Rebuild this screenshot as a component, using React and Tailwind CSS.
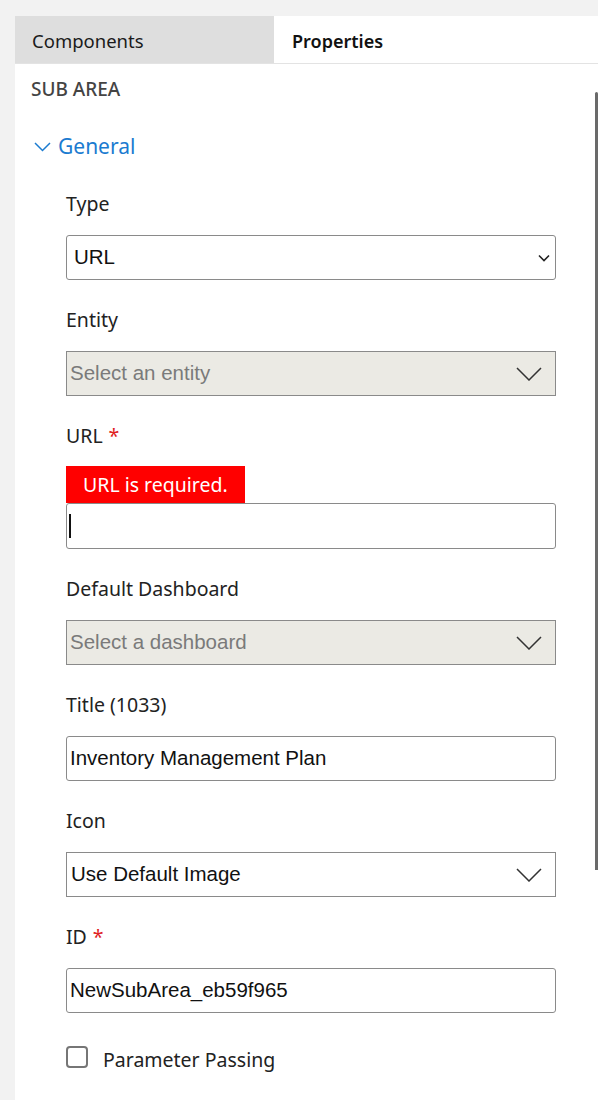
import React from 'react';

const segoe = { fontFamily: '"Noto Sans", "Open Sans", sans-serif' };

const BigChevron = () => (
  <svg width="26" height="14" viewBox="0 0 26 14" fill="none" className="shrink-0">
    <path d="M1 1 L13 13 L25 1" stroke="#333" strokeWidth="1.5" />
  </svg>
);

const Label = ({ children, required }) => (
  <div className="h-[28px] leading-[28px] text-[19.5px] text-[#222] mb-[17px]">
    {children}
    {required && <span className="text-[#e0221f] ml-[6px]">*</span>}
  </div>
);

const GraySelect = ({ placeholder }) => (
  <div className="h-[45px] border border-[#8a8a8a] bg-[#ebeae4] flex items-center justify-between pl-[3px] pr-[13px]">
    <span className="font-['Liberation_Sans',Arial,sans-serif] text-[20.5px] text-[#7a7a7a]">{placeholder}</span>
    <BigChevron />
  </div>
);

const TextInput = ({ value }) => (
  <div className="h-[45px] border border-[#8a8a8a] rounded-[3px] bg-white flex items-center pl-[3px]">
    <span className="font-['Liberation_Sans',Arial,sans-serif] text-[20.5px] text-[#111]">{value}</span>
  </div>
);

export default function App() {
  return (
    <div className="min-h-[1100px] bg-[#f2f2f2] pt-[16px] pl-[15px]" style={segoe}>
      <div className="bg-white relative min-h-[1084px]">
        {/* Tabs */}
        <div className="flex h-[48px] border-b border-[#e3e3e3]">
          <div className="w-[259px] bg-[#dedede] flex items-center pl-[17px] pt-[3px] text-[18.5px] text-[#1a1a1a]">
            Components
          </div>
          <div className="flex-1 flex items-center pl-[18px] pt-[3px] text-[18px] font-semibold text-[#111]">
            Properties
          </div>
        </div>

        {/* scrollbar */}
        <div className="absolute right-0 top-[76px] w-[3px] h-[778px] bg-[#6a6a6a] rounded-t-[2px]" />

        <div className="pl-[16px] pr-[42px]">
          <div className="h-[50px] flex items-center text-[19px] font-medium text-[#444]">
            SUB AREA
          </div>

          <div className="mt-[17px] h-[32px] flex items-center gap-[7px] pl-[3px] text-[#1b7bd0]">
            <svg width="17" height="10" viewBox="0 0 17 10" fill="none">
              <path d="M1 1 L8.5 8.5 L16 1" stroke="#1b7bd0" strokeWidth="1.5" />
            </svg>
            <span className="text-[21px]">General</span>
          </div>

          <div className="pl-[35px] mt-[27px]">
            {/* Type */}
            <div className="mb-[26px]">
              <Label>Type</Label>
              <div className="h-[45px] border border-[#8a8a8a] rounded-[3px] bg-white flex items-center justify-between pl-[7px] pr-[4px]">
                <span className="font-['Liberation_Sans',Arial,sans-serif] text-[20.5px] text-[#111]">URL</span>
                <svg width="14" height="8" viewBox="0 0 14 8" fill="none">
                  <path d="M2 1.5 L7 6.5 L12 1.5" stroke="#222" strokeWidth="1.6" />
                </svg>
              </div>
            </div>

            {/* Entity */}
            <div className="mb-[26px]">
              <Label>Entity</Label>
              <GraySelect placeholder="Select an entity" />
            </div>

            {/* URL */}
            <div className="mb-[26px]">
              <Label required>URL</Label>
              <div className="flex w-fit h-[37px] items-center bg-[#ff0000] text-white text-[19.5px] px-[17px] -mt-[1px]">
                URL is required.
              </div>
              <div className="h-[46px] border border-[#8a8a8a] rounded-[3px] bg-white flex items-center pl-[2px]">
                <div className="w-[2px] h-[24px] bg-[#111]" />
              </div>
            </div>

            {/* Default Dashboard */}
            <div className="mb-[26px]">
              <Label>Default Dashboard</Label>
              <GraySelect placeholder="Select a dashboard" />
            </div>

            {/* Title */}
            <div className="mb-[26px]">
              <Label>Title (1033)</Label>
              <TextInput value="Inventory Management Plan" />
            </div>

            {/* Icon */}
            <div className="mb-[26px]">
              <Label>Icon</Label>
              <div className="h-[45px] border border-[#8a8a8a] bg-white flex items-center justify-between pl-[4px] pr-[13px]">
                <span className="font-['Liberation_Sans',Arial,sans-serif] text-[20.5px] text-[#111]">Use Default Image</span>
                <BigChevron />
              </div>
            </div>

            {/* ID */}
            <div className="mb-[26px]">
              <Label required>ID</Label>
              <TextInput value="NewSubArea_eb59f965" />
            </div>

            {/* Parameter Passing */}
            <div className="flex items-center gap-[15px]">
              <div className="w-[22px] h-[22px] border-2 border-[#767676] rounded-[4px] bg-white" />
              <span className="text-[19.5px] text-[#222] mt-[6px]">Parameter Passing</span>
            </div>
          </div>
        </div>
      </div>
    </div>
  );
}
